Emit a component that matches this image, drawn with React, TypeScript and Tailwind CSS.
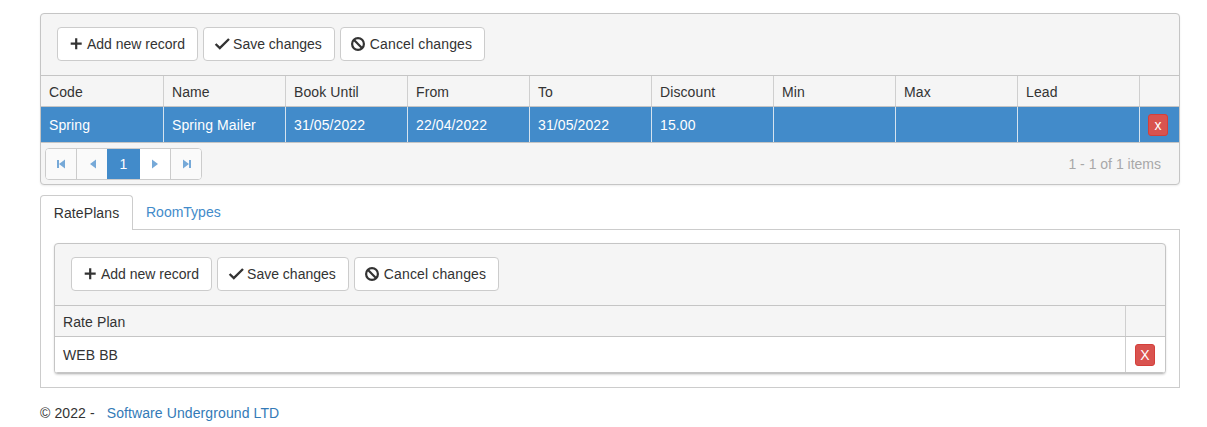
const columns = ['Code', 'Name', 'Book Until', 'From', 'To', 'Discount', 'Min', 'Max', 'Lead', ''];
const row = ['Spring', 'Spring Mailer', '31/05/2022', '22/04/2022', '31/05/2022', '15.00', '', '', ''];

const PlusIcon = () => (
  <svg width="14" height="14" viewBox="0 0 14 14" fill="#333333" className="overflow-visible">
    <path d="M5.1 1.2h2.2v4.4h4.4v2.2H7.3v4.4H5.1V7.8H0.7V5.6h4.4z" />
  </svg>
);

const CheckIcon = () => (
  <svg width="14" height="14" viewBox="0 0 14 14" fill="none" stroke="#333333" strokeWidth="2.4" className="overflow-visible">
    <path d="M-0.4 7l4.2 4L13 2" />
  </svg>
);

const BanIcon = () => (
  <svg width="14" height="14" viewBox="0 0 14 14" fill="none" stroke="#333333" strokeWidth="2.2" className="overflow-visible">
    <circle cx="5" cy="7" r="5.9" />
    <path d="M0.8 2.8l8.4 8.4" />
  </svg>
);

const ToolButton = ({ icon, label, wide }: { icon: React.ReactNode; label: string; wide?: boolean }) => (
  <button className={`flex h-[34px] items-center gap-[3px] rounded border border-[#cccccc] bg-white px-[12px] text-[14px] text-[#333333] ${wide ? 'tracking-[0.14px]' : 'tracking-normal'}`}>
    {icon}
    {label}
  </button>
);

const Toolbar = () => (
  <div className="flex h-[62px] items-start gap-[5px] border-b border-[#c5c5c5] pl-[16px] pt-[13px]">
    <ToolButton icon={<PlusIcon />} label="Add new record" />
    <ToolButton icon={<CheckIcon />} label="Save changes" />
    <ToolButton icon={<BanIcon />} label="Cancel changes" wide />
  </div>
);

const TriangleLeft = ({ bar }: { bar?: boolean }) => (
  <svg width="11" height="10" viewBox="0 0 11 10" fill="#76a9d8">
    {bar && <rect x="1" y="1" width="2" height="8" />}
    <path d="M9 0.5v9L3 5z" />
  </svg>
);

const TriangleRight = ({ bar }: { bar?: boolean }) => (
  <svg width="11" height="10" viewBox="0 0 11 10" fill="#76a9d8">
    <path d="M2 0.5v9L8 5z" />
    {bar && <rect x="8" y="1" width="2" height="8" />}
  </svg>
);

const Pager = () => (
  <div className="flex h-[41px] items-start justify-between pl-[4px] pr-[18px] pt-[5px]">
    <div className="flex h-[32px] overflow-hidden rounded border border-[#cccccc] bg-white">
      <div className="flex w-[31px] items-center justify-center border-r border-[#cccccc] bg-[#fafafa]"><TriangleLeft bar /></div>
      <div className="flex w-[30px] items-center justify-center bg-[#fafafa]"><TriangleLeft /></div>
      <div className="flex w-[33px] items-center justify-center bg-[#428bca] text-[14px] text-white">1</div>
      <div className="flex w-[31px] items-center justify-center border-r border-[#cccccc]"><TriangleRight /></div>
      <div className="flex w-[30px] items-center justify-center bg-[#fafafa]"><TriangleRight bar /></div>
    </div>
    <span className="pt-[6px] text-[14px] tracking-normal text-[#a8a8a8]">1 - 1 of 1 items</span>
  </div>
);

const DeleteButton = ({ label }: { label: string }) => (
  <button className="flex h-[22px] w-[20px] items-center justify-center rounded-[3px] border border-[#d43f3a] bg-[#d9534f] text-[14px] leading-none text-white">
    {label}
  </button>
);

export default function App() {
  return (
    <div className="flex min-h-[427px] flex-col bg-white pl-[40px] pr-[27px] pt-[13px] font-['Liberation_Sans',Arial,sans-serif] text-[14px] tracking-[0.1px] text-[#333333]">
      <div className="overflow-hidden rounded border border-[#c5c5c5] bg-[#f5f5f5] shadow-[0_1px_2px_rgba(0,0,0,0.08)]">
        <Toolbar />
        <div className="grid h-[31px] grid-cols-[123px_repeat(8,122px)_1fr] border-b border-[#c5c5c5]">
          {columns.map((col, i) => (
            <div key={i} className="flex items-center border-r border-[#cfcfcf] pl-[8px] pt-[2px] last:border-r-0">
              {col}
            </div>
          ))}
        </div>
        <div className="grid h-[36px] grid-cols-[123px_repeat(8,122px)_1fr] border-b border-[#c5c5c5] bg-[#428bca] text-white">
          {row.map((cell, i) => (
            <div key={i} className="flex items-center border-r border-[#d5e3ef] pl-[8px] pt-[2px]">
              {cell}
            </div>
          ))}
          <div className="flex items-start pl-[8px] pt-[7px]">
            <DeleteButton label="x" />
          </div>
        </div>
        <Pager />
      </div>

      <div className="mt-[10px] flex h-[34px]">
        <div className="z-10 -mb-px flex w-[93px] items-center justify-center rounded-t border border-b-0 border-[#cccccc] bg-white">
          RatePlans
        </div>
        <div className="flex items-center pl-[13px] tracking-normal text-[#428bca]">RoomTypes</div>
      </div>
      <div className="border border-[#cccccc] bg-white px-[13px] pb-[13px] pt-[13px]">
        <div className="overflow-hidden rounded border border-[#c5c5c5] bg-[#f5f5f5] shadow-[0_1px_2px_rgba(0,0,0,0.15)]">
          <Toolbar />
          <div className="grid h-[31px] grid-cols-[1fr_39px] border-b border-[#c5c5c5]">
            <div className="flex items-center border-r border-[#cfcfcf] pl-[8px] pt-[2px]">Rate Plan</div>
            <div />
          </div>
          <div className="grid h-[36px] grid-cols-[1fr_39px] border-b border-[#c5c5c5] bg-white">
            <div className="flex items-center border-r border-[#cfcfcf] pl-[8px] pt-[2px]">WEB BB</div>
            <div className="flex items-start pl-[9px] pt-[7px]">
              <DeleteButton label="X" />
            </div>
          </div>
        </div>
      </div>

      <div className="mt-[15px] flex">
        <span>© 2022 -</span>
        <a className="ml-[12px] text-[#337ab7]">Software Underground LTD</a>
      </div>
    </div>
  );
}
